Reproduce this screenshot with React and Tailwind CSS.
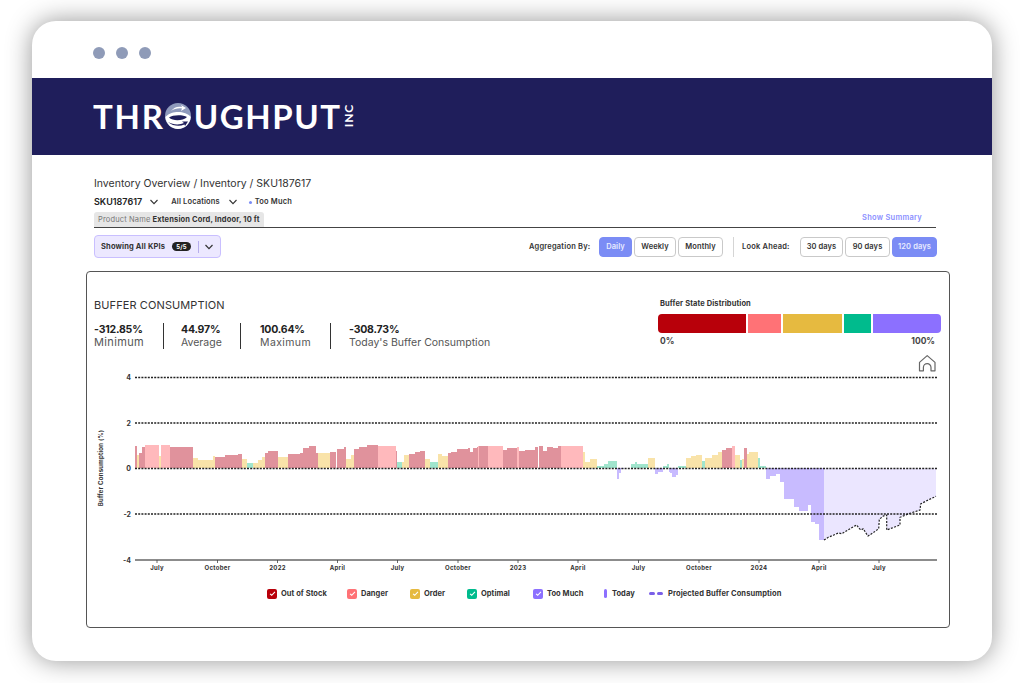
import React from "react";

const R = "#e0929c", P = "#ffb9bc", Y = "#f9e3a9", G = "#a0e5cd", V = "#c8bbff";
const mk = (ox, list) => list.map(([a, b, t, c]) => [ox + a / 3, ox + b / 3, 430 + t / 3, c]);
const bars = [
  ...mk(90, [[135,141,47,R],[141,147,75,Y],[147,156,69,R],[157,166,52,R],[166,207,45,P],[207,214,77,Y],[214,240,45,P],[240,310,52,R],[310,323,83,Y],[323,368,90,Y],[368,376,78,Y],[376,405,80,R],[405,445,75,R],[445,457,73,R],[457,471,87,Y],[471,489,100,G],[489,505,98,Y],[505,515,90,Y],[515,524,80,Y],[524,534,68,R],[534,563,64,R],[563,593,80,Y],[593,630,72,R],[630,638,68,R],[638,658,55,R],[658,678,48,R],[678,684,70,R],[684,720,70,Y],[720,738,66,R],[742,762,57,R],[762,767,50,R],[767,783,87,Y],[783,793,76,Y],[793,808,58,R],[808,832,52,R],[832,865,45,R],[865,900,47,P]]),
  ...mk(380, [[0,47,47,P],[47,52,63,R],[52,66,96,G],[66,72,96,Y],[72,88,76,Y],[88,104,71,R],[104,120,66,R],[120,134,63,R],[134,149,87,Y],[149,173,96,G],[173,187,72,Y],[187,203,78,Y],[203,214,68,R],[214,232,65,R],[232,265,58,R],[265,269,55,R],[271,280,67,R],[280,290,55,R],[290,295,50,R],[295,298,48,P],[298,323,47,R],[323,369,47,P],[369,382,60,R],[382,411,55,R],[411,417,50,P],[417,434,63,R],[434,466,59,R],[466,474,52,R],[476,490,48,R],[490,500,63,R],[500,520,50,R],[520,535,54,R],[535,542,48,R],[542,610,47,P],[610,614,65,Y],[614,630,96,Y],[630,652,88,Y],[652,672,108,G],[672,685,102,G],[685,710,94,G],[710,716,146,V],[716,722,128,V],[722,733,118,V],[733,753,113,G],[753,765,103,G],[765,770,96,G],[770,804,102,G],[804,824,83,Y],[824,835,131,V],[835,850,125,V],[850,860,108,G],[860,867,102,G],[867,877,125,V],[877,888,142,V],[888,895,135,V],[895,900,110,G]]),
  ...mk(670, [[0,7,130,V],[7,15,142,V],[15,25,125,V],[25,47,109,G],[47,62,83,Y],[62,78,78,Y],[78,95,74,Y],[95,106,93,G],[106,125,85,Y],[125,144,74,Y],[144,157,66,Y],[157,168,60,R],[168,186,55,R],[186,196,47,P],[196,210,75,Y],[210,216,90,G],[216,223,88,Y],[223,232,55,R],[232,238,72,Y],[238,264,65,Y],[264,270,83,G],[270,288,109,G],[288,300,146,V],[300,318,137,V],[318,330,133,V],[330,343,155,V],[343,372,206,V],[372,386,232,V],[386,415,243,V],[415,423,225,V],[423,436,276,V],[436,447,281,V],[447,462,330,V]]),
];
const zero = 468.4;
const proj = [[462,330],[475,322],[490,316],[505,309],[515,311],[530,302],[545,293],[560,285],[567,295],[573,300],[580,296],[587,308],[594,318],[610,308],[626,296],[628,268],[640,258],[650,255],[650,300],[690,285],[690,262],[720,250],[750,240],[752,222],[770,212],[798,199]]
  .map(([x, y]) => `${(670 + x / 3).toFixed(1)},${(430 + y / 3).toFixed(1)}`).join(" ");
const ticks = [[157,"July"],[217.5,"October"],[277.5,"2022"],[337.5,"April"],[397.5,"July"],[458,"October"],[518,"2023"],[578,"April"],[638.5,"July"],[699,"October"],[759,"2024"],[819,"April"],[879,"July"]];
const grid = [[377.5,"4"],[423,"2"],[468.5,"0"],[514,"-2"]];

function Chart() {
  return (
    <svg width="862" height="226" viewBox="87 352 862 226" className="block">
      <path d="M927.2 355.6 L935 362.4 V370.8 H931 V367.4 a3.8 3.8 0 0 0 -7.6 0 V370.8 H919.5 V362.4 Z" fill="none" stroke="#666" strokeWidth="1.2" strokeLinejoin="round" />
      {bars.map(([a, b, t, c], i) =>
        t <= zero
          ? <rect key={i} x={a} y={t} width={b - a} height={zero - t} fill={c} shapeRendering="crispEdges" />
          : <rect key={i} x={a} y={zero} width={b - a} height={t - zero} fill={c} shapeRendering="crispEdges" />
      )}
      <polygon points={`824,468.4 ${proj} 936,468.4`} fill="#ebe6ff" />
      <polyline points={proj} fill="none" stroke="#222" strokeWidth="1.2" strokeDasharray="2 1.4" />
      {grid.map(([y, l]) => (
        <g key={l}>
          <line x1="135" x2="937" y1={y} y2={y} stroke="#222" strokeWidth="1.3" strokeDasharray="2 1.2" />
          <text x="131" y={y + 2.5} textAnchor="end" fontSize="7" fontWeight="700" fill="#333">{l}</text>
        </g>
      ))}
      <text x="131" y="562.5" textAnchor="end" fontSize="7" fontWeight="700" fill="#333">-4</text>
      <line x1="135" x2="937" y1="560" y2="560" stroke="#666" strokeWidth="1.4" />
      {ticks.map(([x, l]) => (
        <g key={x}>
          <line x1={x} x2={x} y1="560" y2="563" stroke="#444" strokeWidth="0.8" />
          <text x={x} y="570" textAnchor="middle" fontSize="6" fontWeight="700" fill="#333" letterSpacing="0.3">{l}</text>
        </g>
      ))}
      <text transform="translate(103 468) rotate(-90)" textAnchor="middle" fontSize="6" fontWeight="700" fill="#333" letterSpacing="0.25">Buffer Consumption (%)</text>
    </svg>
  );
}

const Check = ({ className }) => (
  <span className={`flex h-[10px] w-[10px] items-center justify-center rounded-[2px] ${className}`}>
    <svg width="7" height="7" viewBox="0 0 8 8"><path d="M1.2 4.4 L3.1 6 L6.8 2.2" fill="none" stroke="#fff" strokeWidth="1.2" /></svg>
  </span>
);

const Btn = ({ children, on, className = "" }) => (
  <span className={`flex h-[20px] items-center justify-center rounded-[4px] border text-[7.5px] font-semibold tracking-[0.1px] ${on ? "border-[#7b8cf5] bg-[#7b8cf5] text-[#e8ebff]" : "border-[#c9c9c9] bg-white text-[#333]"} ${className}`}>{children}</span>
);

const Stat = ({ v, l, className, labelClass }) => (
  <div className={className}>
    <div className="text-[10.5px] leading-[13px] font-bold tracking-[-0.2px] text-[#222]">{v}</div>
    <div className={`leading-[13px] text-[#555] ${labelClass}`}>{l}</div>
  </div>
);

const Legend = ({ c, l, className }) => (
  <div className={`flex items-center gap-[4px] ${className}`}><Check className={c} /><span>{l}</span></div>
);

export default function App() {
  return (
    <div className="h-[683px] w-[1024px] overflow-hidden bg-white pt-[21px] pl-[32px] font-['Inter','Liberation_Sans',sans-serif]">
      <div className="h-[640px] w-[960px] overflow-hidden rounded-[24px] bg-white shadow-[0_0_26px_rgba(0,0,0,0.42)]">
        <div className="flex h-[57px] items-center gap-[11px] pt-[7px] pl-[61px]">
          <span className="h-[12px] w-[12px] rounded-full bg-[#8f9bb8]" />
          <span className="h-[12px] w-[12px] rounded-full bg-[#8f9bb8]" />
          <span className="h-[12px] w-[12px] rounded-full bg-[#8f9bb8]" />
        </div>

        <div className="flex h-[77px] items-center bg-[#1f1e5b] pb-[1px] pl-[61px] font-['Lato',sans-serif] text-[33px] leading-none font-bold text-white">
          <span className="tracking-[1.8px]">THR</span>
          <svg width="26" height="26" viewBox="0 0 26 26" className="mr-[3px]">
            <circle cx="13" cy="13" r="13" fill="#8f9abc" />
            <path d="M0.3 14 C4 10 9 9 13 9 C18 9 23 10.5 25.8 14 C25 21 19.5 26 13 26 C6.5 26 1 21 0.3 14 Z" fill="#fff" />
            <path d="M4 14.5 C8 11.5 18 11.5 22 14 C18 18 8 18.5 4 14.5 Z" fill="#1f1e5b" />
            <path d="M3 19 C8 22 15 22 19 20 L17 18.5 L23 18.5 L20 23 L19.5 21.5 C14 24 8 23 3 19 Z" fill="#1f1e5b" />
            <path d="M6 8 C9 4 13 3 17 4 L16 2 L21 5 L16 8 L17 5.5 C13 5 9 6 6 8 Z" fill="#fff" />
          </svg>
          <span className="tracking-[1.5px]">UGHPUT</span>
          <span className="ml-[2px] rotate-180 text-[12px] leading-[12px] tracking-[0.8px] [writing-mode:vertical-rl]">INC</span>
        </div>

        <div className="pr-[42px] pl-[54px]">
          <div className="pr-[13px] pl-[8px]">
            <div className="pt-[23px] text-[10.5px] leading-[12px] text-[#333]">Inventory Overview / Inventory / SKU187617</div>
            <div className="mt-[6px] flex h-[12px] items-center text-[#222]">
              <span className="text-[9px] font-semibold">SKU187617</span>
              <svg width="10" height="6" viewBox="0 0 10 6" className="ml-[7px]"><path d="M1.5 1 L5 4.6 L8.5 1" fill="none" stroke="#333" strokeWidth="1.1" /></svg>
              <span className="ml-[12px] text-[7.5px] font-semibold tracking-[0.15px] text-[#333]">All Locations</span>
              <svg width="10" height="6" viewBox="0 0 10 6" className="ml-[8px]"><path d="M1.5 1 L5 4.6 L8.5 1" fill="none" stroke="#333" strokeWidth="1.1" /></svg>
              <span className="ml-[11px] h-[3px] w-[3px] rounded-full bg-[#7b8cf5]" />
              <span className="ml-[3px] text-[7.5px] font-semibold tracking-[0.15px] text-[#333]">Too Much</span>
            </div>
            <div className="mt-[4px] mr-[1px] flex h-[16px] items-end justify-between border-b border-[#444]">
              <div className="flex h-[15px] items-center rounded-t-[3px] bg-[#e6e6e6] px-[4px] text-[7.5px] tracking-[0.15px] text-[#777]">
                Product Name <b className="ml-[2px] font-bold text-[#333]">Extension Cord, Indoor, 10 ft</b>
              </div>
              <span className="mr-[14px] mb-[4px] text-[7.5px] font-semibold tracking-[0.25px] text-[#8a8fff]">Show Summary</span>
            </div>
            <div className="mt-[7px] flex h-[23px] items-center">
              <div className="flex h-[23px] w-[127px] items-center rounded-[4px] border border-[#c9bfff] bg-[#ece8ff] pl-[6px] text-[7.5px] font-bold tracking-[0.15px] text-[#333]">
                Showing All KPIs
                <span className="ml-[7px] flex h-[9px] w-[19px] items-center justify-center rounded-full bg-[#222] text-[6px] leading-none text-white">5/5</span>
                <span className="ml-[7px] h-[12px] w-px bg-[#b7adec]" />
                <svg width="10" height="6" viewBox="0 0 10 6" className="ml-[5px]"><path d="M1.5 1 L5 4.6 L8.5 1" fill="none" stroke="#333" strokeWidth="1.2" /></svg>
              </div>
              <span className="ml-[308px] w-[70px] text-[7.5px] font-semibold tracking-[0.2px] text-[#333]">Aggregation By:</span>
              <Btn on className="w-[33px]">Daily</Btn>
              <Btn className="ml-[2px] w-[42px]">Weekly</Btn>
              <Btn className="ml-[2px] w-[45px]">Monthly</Btn>
              <span className="ml-[10px] h-[20px] w-px bg-[#d5d5d5]" />
              <span className="ml-[8px] w-[58px] text-[7.5px] font-semibold tracking-[0.2px] text-[#333]">Look Ahead:</span>
              <Btn className="w-[43px]">30 days</Btn>
              <Btn className="ml-[2px] w-[45px]">90 days</Btn>
              <Btn on className="ml-[2px] w-[45px]">120 days</Btn>
            </div>
          </div>

          <div className="mt-[13px] h-[357px] w-[864px] rounded-[4px] border-[1.5px] border-[#555]">
            <div className="flex h-[79.5px] pt-[26px] pl-[7px]">
              <div className="w-[564px]">
                <div className="text-[11px] leading-[14px] tracking-[0.1px] text-[#333]">BUFFER CONSUMPTION</div>
                <div className="mt-[11px] flex h-[26px]">
                  <Stat v="-312.85%" l="Minimum" className="w-[69px]" labelClass="text-[11px] tracking-[0.35px]" />
                  <span className="h-[26px] w-px bg-[#333]" />
                  <Stat v="44.97%" l="Average" className="ml-[17px] w-[59px]" labelClass="text-[10.5px]" />
                  <span className="h-[26px] w-px bg-[#333]" />
                  <Stat v="100.64%" l="Maximum" className="ml-[19px] w-[70px]" labelClass="text-[10.5px] tracking-[0.4px]" />
                  <span className="h-[26px] w-px bg-[#333]" />
                  <Stat v="-308.73%" l="Today's Buffer Consumption" className="ml-[18px]" labelClass="text-[10.5px]" />
                </div>
              </div>
              <div className="w-[283px]">
                <div className="pl-[2px] text-[7.5px] leading-[12px] font-bold tracking-[0.1px] text-[#333]">Buffer State Distribution</div>
                <div className="mt-[4px] flex h-[19px] gap-[2px]">
                  <span className="w-[88px] rounded-l-[4px] bg-[#b8000a]" />
                  <span className="w-[33px] bg-[#ff7276]" />
                  <span className="w-[59px] bg-[#e6ba40]" />
                  <span className="w-[27px] bg-[#00bb8d]" />
                  <span className="w-[68px] rounded-r-[4px] bg-[#8c70ff]" />
                </div>
                <div className="mt-[2px] flex justify-between px-[2px] pr-[6px] text-[8.5px] leading-[12px] font-bold text-[#444]">
                  <span>0%</span><span>100%</span>
                </div>
              </div>
            </div>
            <Chart />
            <div className="mt-[10px] flex h-[12px] items-center text-[7.5px] font-bold tracking-[0.05px] text-[#333]">
              <Legend c="bg-[#b8000a]" l="Out of Stock" className="ml-[180px] w-[80px]" />
              <Legend c="bg-[#ff7276]" l="Danger" className="w-[63px]" />
              <Legend c="bg-[#e6ba40]" l="Order" className="w-[57px]" />
              <Legend c="bg-[#00bb8d]" l="Optimal" className="w-[66px]" />
              <Legend c="bg-[#8c70ff]" l="Too Much" className="w-[71px]" />
              <div className="flex w-[45px] items-center gap-[5px]"><span className="h-[9px] w-[3px] rounded-full bg-[#8c70ff]" /><span>Today</span></div>
              <div className="flex items-center gap-[5px]">
                <span className="flex gap-[2px]"><span className="h-[3px] w-[6px] rounded-full bg-[#7a5fe8]" /><span className="h-[3px] w-[6px] rounded-full bg-[#7a5fe8]" /></span>
                <span className="tracking-[0.1px]">Projected Buffer Consumption</span>
              </div>
            </div>
          </div>
        </div>
      </div>
    </div>
  );
}
